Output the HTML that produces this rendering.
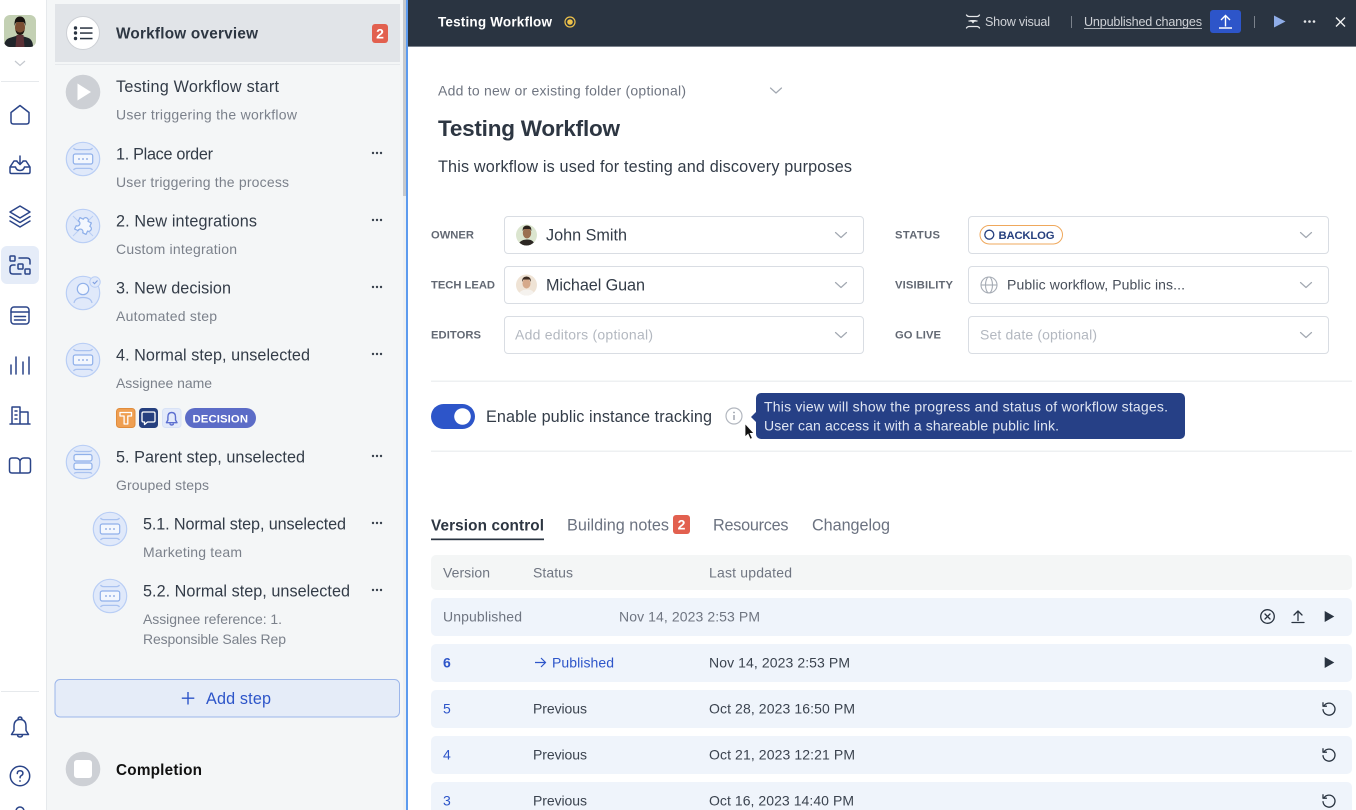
<!DOCTYPE html>
<html lang="en"><head><meta charset="utf-8"><title>Testing Workflow</title>
<style>
html,body{margin:0;padding:0;width:1356px;height:810px;overflow:hidden;background:#fff}
svg{display:block}
text{font-family:"Liberation Sans",sans-serif;white-space:pre}
.t16{font-size:16.2px;fill:#333c48}
.s14{font-size:14px;fill:#7b818b}
.lab{font-size:11.2px;font-weight:bold;fill:#626873}
.p14{font-size:14px;fill:#b3b8c0}
.r14{font-size:14px;fill:#3b434f}
.g14{font-size:14px;fill:#6f7581}
.b14{font-size:14px;fill:#2d55c9}
.hd{font-size:12.6px;fill:#cfd2d7}
.tab{font-size:16.2px;fill:#6b7280}
.ic{fill:none;stroke:#2a4488;stroke-width:1.5;stroke-linecap:round;stroke-linejoin:round}
.chev{fill:none;stroke:#a2a8b1;stroke-width:1.2;stroke-linecap:round;stroke-linejoin:round}
.dk{fill:none;stroke:#2a3441;stroke-width:1.3;stroke-linecap:round;stroke-linejoin:round}
</style></head><body>
<svg width="1356" height="810" viewBox="0 0 1356 810" xmlns="http://www.w3.org/2000/svg">
<defs>
<g id="step">
<circle r="16.7" fill="#e0e9fa" stroke="#b9cef5" stroke-width="1.2"/>
<path d="M-9.5-11q1 1.6 3 1.6h13q2 0 3-1.6M-9.5 11q1-1.6 3-1.6h13q2 0 3 1.6" fill="none" stroke="#a9c2f0" stroke-width="1.2"/>
<rect x="-9.7" y="-5" width="19.4" height="10" rx="2" fill="#f3f7fe" stroke="#8fb0ea" stroke-width="1.2"/>
<circle cx="-4" r=".9" fill="#7f9fe0"/><circle r=".9" fill="#7f9fe0"/><circle cx="4" r=".9" fill="#7f9fe0"/>
</g>
<g id="dots"><circle cx="-4" r="1.2" fill="#39424e"/><circle r="1.2" fill="#39424e"/><circle cx="4" r="1.2" fill="#39424e"/></g>
<path id="chv" d="M-5.5-2.5 0 2.5 5.5-2.5" class="chev"/>
<g id="reset"><path d="M-5-3.2A6 6 0 1 1-6 .6" class="dk"/><path d="M-6-6.2v3.400h3.400" class="dk"/></g>
<path id="play" d="M-4.8-5.500 4.800 0-4.800 5.500Z" fill="#2a3441"/>
</defs>

<!-- rail -->
<rect x="0" y="0" width="46" height="810" fill="#fff"/>
<rect x="46" y="0" width="1" height="810" fill="#e6e9ec"/>
<clipPath id="av"><rect x="4" y="15" width="32" height="32" rx="6"/></clipPath>
<g clip-path="url(#av)">
<rect x="4" y="15" width="32" height="32" fill="#c3d0b3"/>
<path d="M4 47q0-8 7-9.500l5-1.500h6l5 1.500q6 1.500 6 9.500Z" fill="#20252a"/>
<path d="M16.500 35h7l1 12h-9Z" fill="#5a3035"/>
<ellipse cx="20" cy="27.500" rx="5" ry="7" fill="#7a4e33"/>
<path d="M14.500 26q-.5-9.500 5.500-9.500t5.500 9.500q-.8-3.500-2.500-4h-6q-1.700.5-2.500 4Z" fill="#17120f"/>
<path d="M15.500 30q4.500 5 9 0-.7 5-4.500 5t-4.500-5Z" fill="#211611"/>
</g>
<path d="M15 61l5 4.500 5-4.500" fill="none" stroke="#c4c8ce" stroke-width="1.200"/>
<rect x="1" y="81" width="38" height="1" fill="#e6e9ec"/>
<path d="M11 121.500v-9l9-7 9 7v9q0 2.500-2.500 2.500h-13q-2.500 0-2.500-2.500Z" class="ic"/>
<g class="ic"><path d="M10 167v5q0 1.500 1.500 1.500h17q1.500 0 1.500-1.500v-5l-4-6h-3M10 167l4-6h3M10 167h5.500q1 3.500 4.500 3.500t4.500-3.500H30"/><path d="M20 156v8.500M17 161.500l3 3 3-3"/></g>
<g class="ic"><path d="M20 206l10 6-10 6-10-6Z"/><path d="M10 216.500l10 6 10-6M10 221l10 6 10-6"/></g>
<rect x="1" y="246" width="38" height="38" rx="6" fill="#e5ecf8"/>
<g class="ic"><rect x="10" y="256" width="5" height="5" rx=".8"/><rect x="18" y="264" width="5" height="5" rx=".8"/><rect x="25" y="269" width="5" height="5" rx=".8"/><path d="M19 258h8q3 0 3 3v3M15 265h-2q-3 0-3 3v3q0 3 3 3h8"/></g>
<g class="ic"><rect x="11" y="307" width="18" height="17" rx="3"/><path d="M11 312h18M14.500 316.500h11M14.500 320h11"/></g>
<g class="ic"><path d="M11 374v-9M16 374v-17M23 374v-12M29 374v-17"/></g>
<g class="ic"><path d="M10 424h20M12 424v-17h8v17M20 412h8v12M15 411h2M15 415h2M15 419h2"/></g>
<g class="ic"><path d="M20 461v12M20 461q-1-3-4-3h-4q-2.500 0-2.500 2.500v10q0 2.500 2.500 2.500h16q2.500 0 2.500-2.500v-10q0-2.500-2.500-2.500h-4q-3 0-4 3Z"/></g>
<rect x="1" y="691" width="38" height="1" fill="#e6e9ec"/>
<g class="ic"><path d="M20 719.500q-6 0-6 7v4l-2.500 4h17l-2.500-4v-4q0-7-6-7ZM18 719.500q0-2.500 2-2.500t2 2.500M17.500 734.500q0 2.500 2.500 2.500t2.500-2.500"/></g>
<circle cx="20" cy="776" r="9.700" class="ic"/>
<path d="M17.300 773.500q0-2.800 2.800-2.800t2.800 2.500q0 1.500-1.500 2.300t-1.300 2.200" class="ic"/><circle cx="20" cy="781" r=".9" fill="#26407f"/>
<circle cx="20" cy="811" r="4" class="ic"/>

<!-- sidebar -->
<rect x="47" y="0" width="359" height="810" fill="#f4f6f7"/>
<rect x="403" y="0" width="3" height="810" fill="#eef0f1"/>
<rect x="403" y="0" width="3" height="196" fill="#c6c9cd"/>
<rect x="406" y="0" width="2" height="810" fill="#5d9bee"/>
<rect x="55" y="4" width="345" height="58" fill="#e1e4e8"/>
<rect x="55" y="64" width="345" height="1" fill="#e6e9ec"/>
<circle cx="83" cy="33" r="16.500" fill="#fff" stroke="#cdd0d5" stroke-width="1"/>
<g fill="#2a3441"><circle cx="75.500" cy="28" r="1.700"/><circle cx="75.500" cy="33" r="1.700"/><circle cx="75.500" cy="38.500" r="1.700"/><rect x="80" y="27.300" width="12.500" height="1.500"/><rect x="80" y="32.300" width="12.500" height="1.500"/><rect x="80" y="37.800" width="12.500" height="1.500"/></g>
<text x="116" y="38.500" font-size="15.300" font-weight="bold" fill="#2d3642" textLength="142" lengthAdjust="spacing">Workflow overview</text>
<rect x="372" y="24" width="16" height="19" rx="3" fill="#e2604f"/>
<text x="380" y="38.500" font-size="14" font-weight="bold" fill="#fff" text-anchor="middle">2</text>

<circle cx="83" cy="92" r="17.300" fill="#cdd0d5"/><path d="M77.500 83.500 91 92 77.500 100.500Z" fill="#fff"/>
<text x="116" y="92" class="t16" textLength="163" lengthAdjust="spacing">Testing Workflow start</text>
<text x="116" y="119.500" class="s14" textLength="181" lengthAdjust="spacing">User triggering the workflow</text>

<use href="#step" x="83" y="159"/>
<text x="116" y="159.300" class="t16" textLength="97" lengthAdjust="spacing">1. Place order</text>
<text x="116" y="187" class="s14" textLength="173" lengthAdjust="spacing">User triggering the process</text>
<use href="#dots" x="377" y="153"/>

<circle cx="83" cy="226" r="16.700" fill="#e0e9fa" stroke="#b9cef5" stroke-width="1.200"/>
<path d="M73 216 93 236M93 216 73 236" stroke="#b9cef5" stroke-width="1"/>
<path transform="translate(83 226) rotate(25) scale(1.050)" d="M-6-6h3.500a2.500 2.500 0 1 1 5 0H6v3.500a2.500 2.500 0 1 1 0 5V6H2.500a2.500 2.500 0 1 0-5 0H-6V2.500a2.500 2.500 0 1 0 0-5Z" fill="#f3f7fe" stroke="#8fb0ea" stroke-width="1.200" stroke-linejoin="round"/>
<text x="116" y="226.500" class="t16" textLength="141" lengthAdjust="spacing">2. New integrations</text>
<text x="116" y="254" class="s14" textLength="121" lengthAdjust="spacing">Custom integration</text>
<use href="#dots" x="377" y="220"/>

<circle cx="83" cy="293" r="16.700" fill="#e0e9fa" stroke="#b9cef5" stroke-width="1.200"/>
<circle cx="83" cy="289" r="5.700" fill="#f3f7fe" stroke="#8fb0ea" stroke-width="1.200"/>
<path d="M74 303q1-5.500 9-5.500t9 5.500" fill="none" stroke="#a9c2f0" stroke-width="1.200"/>
<circle cx="95" cy="282" r="5.200" fill="#e0e9fa" stroke="#b9cef5"/><path d="M92.800 282l1.700 1.700 3-3.200" fill="none" stroke="#7f9fe0" stroke-width="1.100"/>
<text x="116" y="293.500" class="t16" textLength="115" lengthAdjust="spacing">3. New decision</text>
<text x="116" y="321" class="s14" textLength="101" lengthAdjust="spacing">Automated step</text>
<use href="#dots" x="377" y="287"/>

<use href="#step" x="83" y="360"/>
<text x="116" y="360.500" class="t16" textLength="194" lengthAdjust="spacing">4. Normal step, unselected</text>
<text x="116" y="388" class="s14" textLength="96" lengthAdjust="spacing">Assignee name</text>
<use href="#dots" x="377" y="354"/>

<rect x="116.500" y="408.500" width="18.500" height="19" rx="3" fill="#ef9f52" stroke="#e08c3c"/>
<path d="M120 412.500h11.500v3.500h-3.700v8h-3.700v-8H120Z" fill="none" stroke="#fff" stroke-width="1.300" stroke-linejoin="round"/>
<rect x="139" y="408" width="19" height="20" rx="3.500" fill="#26407f"/>
<path d="M143.500 412h10q1.500 0 1.500 1.500v7q0 1.500-1.500 1.500h-6l-3 2.500v-2.500h-1q-1.500 0-1.500-1.500v-7q0-1.500 1.500-1.500Z" fill="none" stroke="#fff" stroke-width="1.300" stroke-linejoin="round"/>
<rect x="162.500" y="408.500" width="18.500" height="19" rx="3" fill="#e3eafa" stroke="#d8e2f6"/>
<path d="M171.700 412.500q-3.800 0-3.800 4.500v3l-1.500 2.700h10.600l-1.500-2.700v-3q0-4.500-3.800-4.500ZM170 423.500q0 1.500 1.700 1.500t1.700-1.500" fill="none" stroke="#5c6fd0" stroke-width="1.400" stroke-linejoin="round"/>
<rect x="185" y="408" width="71" height="20" rx="10" fill="#5c6cc7"/>
<text x="192.500" y="422.300" font-size="11.300" font-weight="bold" fill="#fff" textLength="55.500" lengthAdjust="spacing">DECISION</text>

<circle cx="83" cy="462" r="16.700" fill="#e0e9fa" stroke="#b9cef5" stroke-width="1.200"/>
<path d="M74 450.500q1 1 3 1h12q2 0 3-1M74 473.500q1-1 3-1h12q2 0 3 1" fill="none" stroke="#a9c2f0" stroke-width="1.200"/>
<rect x="74" y="454.500" width="18" height="6.500" rx="2" fill="#f3f7fe" stroke="#8fb0ea" stroke-width="1.200"/>
<rect x="74" y="463" width="18" height="6.500" rx="2" fill="#f3f7fe" stroke="#8fb0ea" stroke-width="1.200"/>
<text x="116" y="462.500" class="t16" textLength="189" lengthAdjust="spacing">5. Parent step, unselected</text>
<text x="116" y="490" class="s14" textLength="93" lengthAdjust="spacing">Grouped steps</text>
<use href="#dots" x="377" y="456"/>

<use href="#step" x="110" y="529"/>
<text x="143" y="529.500" class="t16" textLength="203" lengthAdjust="spacing">5.1. Normal step, unselected</text>
<text x="143" y="557" class="s14" textLength="99" lengthAdjust="spacing">Marketing team</text>
<use href="#dots" x="377" y="523"/>

<use href="#step" x="110" y="596"/>
<text x="143" y="596.500" class="t16" textLength="207" lengthAdjust="spacing">5.2. Normal step, unselected</text>
<text x="143" y="624" class="s14" textLength="139" lengthAdjust="spacing">Assignee reference: 1.</text>
<text x="143" y="644" class="s14" textLength="143" lengthAdjust="spacing">Responsible Sales Rep</text>
<use href="#dots" x="377" y="590"/>

<rect x="55" y="679.500" width="344.500" height="37.500" rx="5" fill="#e5ecf8" stroke="#9cb6ea"/>
<path d="M188 692v12.500M181.800 698.200h12.500" stroke="#2d55c9" stroke-width="1.400" fill="none"/>
<text x="206" y="704" font-size="16.200" fill="#2d55c9" textLength="65" lengthAdjust="spacing">Add step</text>

<circle cx="83" cy="769" r="17.300" fill="#cdd0d5"/><rect x="74" y="760" width="18" height="18" rx="3" fill="#fff"/>
<text x="116" y="775" font-size="15.300" font-weight="bold" fill="#111" textLength="86" lengthAdjust="spacing">Completion</text>

<!-- header -->
<rect x="408" y="0" width="948" height="46" fill="#2a3441"/>
<rect x="408" y="46" width="948" height="1" fill="#7b828c"/>
<text x="438" y="26.700" font-size="13.500" font-weight="bold" fill="#fff" textLength="114" lengthAdjust="spacing">Testing Workflow</text>
<circle cx="570" cy="22" r="5" fill="none" stroke="#eec24a" stroke-width="1.200"/><circle cx="570" cy="22" r="2.800" fill="#eec24a"/>
<g fill="none" stroke="#e6e8ea" stroke-width="1.300" stroke-linecap="round"><path d="M966.500 15q1 1.500 2.500 1.500h8q1.500 0 2.500-1.500M966.500 28q1-1.500 2.500-1.500h8q1.500 0 2.500 1.500"/><path d="M969 21h8"/></g><path d="M970 20h6l-3 3.500Z" fill="#e6e8ea"/>
<text x="985" y="26" class="hd" textLength="65" lengthAdjust="spacing">Show visual</text>
<rect x="1071" y="16" width="1" height="12" fill="#7b828c"/>
<text x="1084" y="26" class="hd" textLength="118" lengthAdjust="spacing">Unpublished changes</text>
<rect x="1084" y="28" width="118" height="1" fill="#aeb3ba"/>
<rect x="1210" y="10" width="31" height="23" rx="3" fill="#2d55c9"/>
<path d="M1225.500 26.500V15.500M1221 20l4.500-4.500 4.500 4.500M1219 28h13" fill="none" stroke="#fff" stroke-width="1.400"/>
<rect x="1254" y="16" width="1" height="12" fill="#7b828c"/>
<path d="M1274 15.500 1285.500 21.500 1274 27.500Z" fill="#8fade8"/>
<circle cx="1305" cy="21.500" r="1.300" fill="#e6e8ea"/><circle cx="1309.500" cy="21.500" r="1.300" fill="#e6e8ea"/><circle cx="1314" cy="21.500" r="1.300" fill="#e6e8ea"/>
<path d="M1336 17.500l9 9M1345 17.500l-9 9" stroke="#f0f1f2" stroke-width="1.400" fill="none"/>

<!-- title -->
<text x="438" y="95.500" class="g14" textLength="248" lengthAdjust="spacing">Add to new or existing folder (optional)</text>
<use href="#chv" x="776" y="90.500"/>
<text x="438" y="136" font-size="22.500" font-weight="bold" fill="#2d3642" textLength="182" lengthAdjust="spacing">Testing Workflow</text>
<text x="438" y="172" class="t16" textLength="414" lengthAdjust="spacing">This workflow is used for testing and discovery purposes</text>

<!-- form -->
<text x="431" y="238.500" class="lab" textLength="43" lengthAdjust="spacing">OWNER</text>
<text x="431" y="288.500" class="lab" textLength="64" lengthAdjust="spacing">TECH LEAD</text>
<text x="431" y="338.500" class="lab" textLength="50" lengthAdjust="spacing">EDITORS</text>
<text x="895" y="238.500" class="lab" textLength="45" lengthAdjust="spacing">STATUS</text>
<text x="895" y="288.500" class="lab" textLength="58" lengthAdjust="spacing">VISIBILITY</text>
<text x="895" y="338.500" class="lab" textLength="46" lengthAdjust="spacing">GO LIVE</text>
<g fill="#fff" stroke="#d9dde3">
<rect x="504.500" y="216.500" width="359" height="37" rx="3.500"/>
<rect x="504.500" y="266.500" width="359" height="37" rx="3.500"/>
<rect x="504.500" y="316.500" width="359" height="37" rx="3.500"/>
<rect x="968.500" y="216.500" width="360" height="37" rx="3.500"/>
<rect x="968.500" y="266.500" width="360" height="37" rx="3.500"/>
<rect x="968.500" y="316.500" width="360" height="37" rx="3.500"/>
</g>
<clipPath id="a1"><circle cx="526.500" cy="235" r="10.500"/></clipPath>
<g clip-path="url(#a1)"><rect x="516" y="224" width="21" height="22" fill="#dbe5cf"/><path d="M518 246q1-6 8.500-6.500t8.500 6.500Z" fill="#2c2723"/><ellipse cx="527" cy="233" rx="4.200" ry="5.500" fill="#9a6f50"/><path d="M522.500 231q0-5.500 4.500-5.500t4.500 5.500l-1.500-2h-6Z" fill="#2b211b"/></g>
<text x="546" y="240.500" class="t16" textLength="81" lengthAdjust="spacing">John Smith</text>
<use href="#chv" x="841" y="235"/>
<clipPath id="a2"><circle cx="526.500" cy="285" r="10.500"/></clipPath>
<g clip-path="url(#a2)"><rect x="516" y="274" width="21" height="22" fill="#efe3d5"/><path d="M518 296q1-6 8.500-6.500t8.500 6.500Z" fill="#f5f2ee"/><ellipse cx="526.500" cy="283.500" rx="4" ry="5" fill="#d6a98a"/><path d="M522 282q0-5.500 4.500-5.500t4.500 5.500l-1.500-2.500h-6Z" fill="#3b2a20"/></g>
<text x="546" y="290.500" class="t16" textLength="99" lengthAdjust="spacing">Michael Guan</text>
<use href="#chv" x="841" y="285"/>
<text x="515" y="339.500" class="p14" textLength="138" lengthAdjust="spacing">Add editors (optional)</text>
<use href="#chv" x="841" y="335"/>
<rect x="980" y="225.500" width="82.500" height="18.500" rx="9.250" fill="#fff" stroke="#efa85c"/>
<circle cx="989.300" cy="234.700" r="4.500" fill="none" stroke="#26407f" stroke-width="1.300"/>
<text x="998.500" y="238.800" font-size="11.300" font-weight="bold" fill="#26407f" textLength="56" lengthAdjust="spacing">BACKLOG</text>
<use href="#chv" x="1306" y="235"/>
<g fill="none" stroke="#a6acb5" stroke-width="1.100"><circle cx="989" cy="285" r="8"/><ellipse cx="989" cy="285" rx="3.500" ry="8"/><path d="M981 285h16"/></g>
<text x="1007" y="289.500" font-size="14" fill="#474e59" textLength="178" lengthAdjust="spacing">Public workflow, Public ins...</text>
<use href="#chv" x="1306" y="285"/>
<text x="980" y="339.500" class="p14" textLength="117" lengthAdjust="spacing">Set date (optional)</text>
<use href="#chv" x="1306" y="335"/>

<rect x="431" y="380.500" width="921" height="1.500" fill="#eef0f2"/>
<rect x="431" y="450.500" width="921" height="1.500" fill="#eef0f2"/>
<rect x="431" y="404" width="44" height="25" rx="12.500" fill="#2d55c9"/>
<circle cx="462.500" cy="416.500" r="8.300" fill="#fff"/>
<text x="486" y="422" class="t16" textLength="226" lengthAdjust="spacing">Enable public instance tracking</text>
<circle cx="734" cy="416" r="8" fill="none" stroke="#b2b7bf" stroke-width="1.200"/>
<rect x="733.300" y="415" width="1.400" height="5" fill="#9aa0aa"/><circle cx="734" cy="412.500" r=".9" fill="#9aa0aa"/>
<path d="M756 412 751 417 756 422Z" fill="#264086"/>
<rect x="756" y="393" width="429" height="46" rx="5" fill="#264086"/>
<text x="764" y="411.500" font-size="14" fill="#dfe5f2" textLength="404" lengthAdjust="spacing">This view will show the progress and status of workflow stages.</text>
<text x="764" y="430.500" font-size="14" fill="#dfe5f2" textLength="295" lengthAdjust="spacing">User can access it with a shareable public link.</text>
<path d="M745 423.500V437l3-2.800 2.200 5 2.200-1-2.200-4.800h3.800Z" fill="#111" stroke="#fff" stroke-width=".8"/>

<!-- tabs -->
<text x="431" y="530.500" font-size="15.300" font-weight="bold" fill="#2d3642" textLength="113" lengthAdjust="spacing">Version control</text>
<rect x="431" y="538.500" width="113" height="1.700" fill="#2a3441"/>
<text x="567" y="530.500" class="tab" textLength="102" lengthAdjust="spacing">Building notes</text>
<rect x="673" y="515" width="17" height="19" rx="3" fill="#e2604f"/>
<text x="681.500" y="529.500" font-size="14" font-weight="bold" fill="#fff" text-anchor="middle">2</text>
<text x="713" y="530.500" class="tab" textLength="75.500" lengthAdjust="spacing">Resources</text>
<text x="812" y="530.500" class="tab" textLength="78" lengthAdjust="spacing">Changelog</text>

<!-- table -->
<rect x="431" y="555" width="921" height="35" rx="5" fill="#f4f6f6"/>
<text x="443" y="577.500" class="g14" textLength="47" lengthAdjust="spacing">Version</text>
<text x="533" y="577.500" class="g14" textLength="40" lengthAdjust="spacing">Status</text>
<text x="709" y="577.500" class="g14" textLength="83" lengthAdjust="spacing">Last updated</text>
<g fill="#eff4fb">
<rect x="431" y="598" width="921" height="38" rx="5"/>
<rect x="431" y="644" width="921" height="38" rx="5"/>
<rect x="431" y="690" width="921" height="38" rx="5"/>
<rect x="431" y="736" width="921" height="38" rx="5"/>
<rect x="431" y="782" width="921" height="38" rx="5"/>
</g>
<text x="443" y="621.500" class="g14" textLength="79" lengthAdjust="spacing">Unpublished</text>
<text x="619" y="621.500" class="g14" textLength="141" lengthAdjust="spacing">Nov 14, 2023 2:53 PM</text>
<circle cx="1267.500" cy="616.500" r="6.800" class="dk"/>
<path d="M1265 614l5 5M1270 614l-5 5" class="dk"/>
<path d="M1298 620.500V611M1294 615l4-4 4 4M1292 622.500h12" class="dk"/>
<use href="#play" x="1329.500" y="616.500"/>

<text x="443" y="667.500" font-size="14" font-weight="bold" fill="#2d55c9">6</text>
<path d="M535 662.500h10M541 658l4.500 4.500-4.500 4.500" fill="none" stroke="#2d55c9" stroke-width="1.200"/>
<text x="552" y="667.500" class="b14" textLength="62" lengthAdjust="spacing">Published</text>
<text x="709" y="667.500" class="r14" textLength="141" lengthAdjust="spacing">Nov 14, 2023 2:53 PM</text>
<use href="#play" x="1329.500" y="662.500"/>

<text x="443" y="713.500" class="b14">5</text>
<text x="533" y="713.500" class="r14" textLength="54" lengthAdjust="spacing">Previous</text>
<text x="709" y="713.500" class="r14" textLength="146" lengthAdjust="spacing">Oct 28, 2023 16:50 PM</text>
<use href="#reset" x="1329" y="709"/>

<text x="443" y="759.500" class="b14">4</text>
<text x="533" y="759.500" class="r14" textLength="54" lengthAdjust="spacing">Previous</text>
<text x="709" y="759.500" class="r14" textLength="146" lengthAdjust="spacing">Oct 21, 2023 12:21 PM</text>
<use href="#reset" x="1329" y="755"/>

<text x="443" y="805.500" class="b14">3</text>
<text x="533" y="805.500" class="r14" textLength="54" lengthAdjust="spacing">Previous</text>
<text x="709" y="805.500" class="r14" textLength="145" lengthAdjust="spacing">Oct 16, 2023 14:40 PM</text>
<use href="#reset" x="1329" y="801"/>
</svg>
</body></html>
